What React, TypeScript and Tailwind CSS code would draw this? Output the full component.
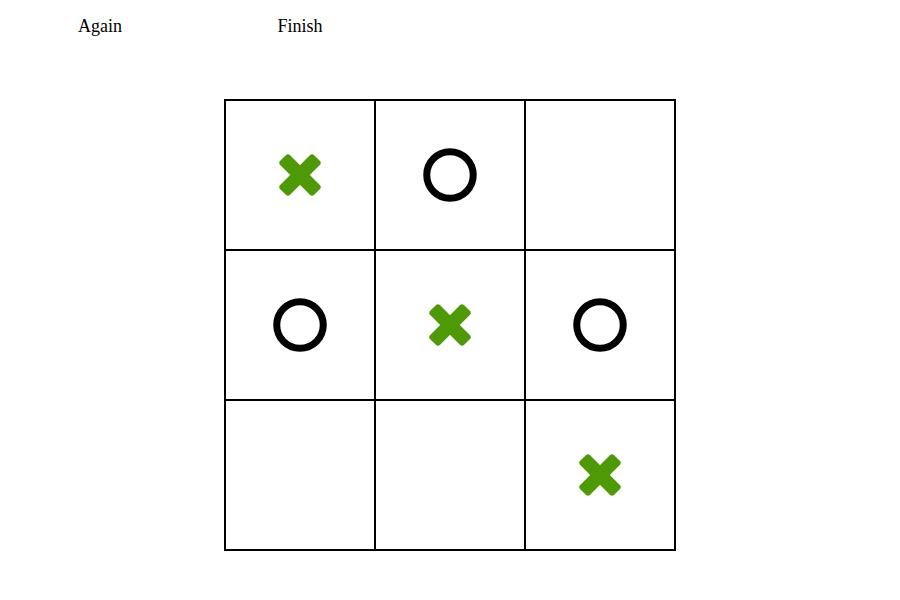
import React from "react";

const XMark = () => (
  <svg width="60" height="60" viewBox="0 0 60 60">
    <g transform="translate(30 30) rotate(45)" fill="#4e9a06">
      <rect x="-24" y="-7" width="48" height="14" rx="3" />
      <rect x="-7" y="-24" width="14" height="48" rx="3" />
    </g>
  </svg>
);

const OMark = () => (
  <svg width="60" height="60" viewBox="0 0 60 60">
    <circle cx="30" cy="30" r="23.25" fill="none" stroke="#000" strokeWidth="7" />
  </svg>
);

const board: (string | null)[] = ["X", "O", null, "O", "X", "O", null, null, "X"];

export default function App() {
  return (
    <div
      className="w-[900px] h-[600px] bg-white pt-[13px]"
      style={{ fontFamily: '"Liberation Serif", "Times New Roman", serif' }}
    >
      <div className="flex text-[18px] leading-[27px] text-black">
        <div className="w-[200px] text-center">Again</div>
        <div className="w-[200px] text-center">Finish</div>
      </div>
      <div className="mx-auto mt-[59px] w-[452px] border border-black grid grid-cols-3">
        {board.map((c, i) => (
          <div
            key={i}
            className="h-[150px] border border-black flex items-center justify-center"
          >
            {c === "X" ? <XMark /> : c === "O" ? <OMark /> : null}
          </div>
        ))}
      </div>
    </div>
  );
}
